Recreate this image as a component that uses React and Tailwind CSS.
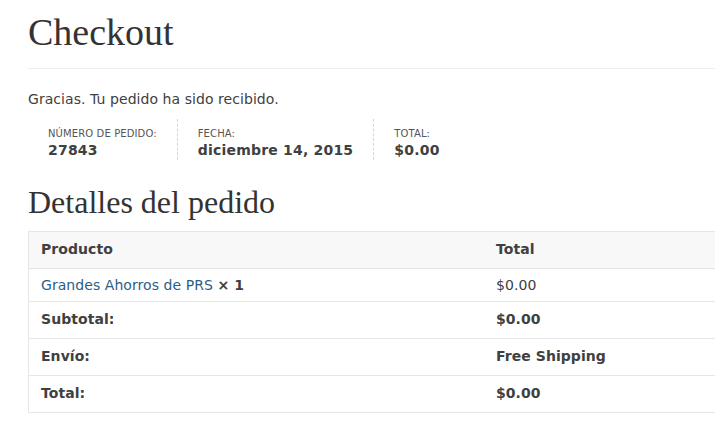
import React from "react";

const serif = { fontFamily: '"Liberation Serif", "Times New Roman", serif' };

function Row({ left, right, head, product, last }) {
  const pad = product ? "pt-[7px] pb-[7px]" : "pt-[8px] pb-[10px]";
  return (
    <div
      className={`flex ${head ? "bg-[#f8f8f8]" : ""} ${last ? "" : "border-b border-[#e6e6e6]"}`}
    >
      <div className={`w-[455px] shrink-0 px-3 leading-[18px] ${pad}`}>{left}</div>
      <div className={`flex-1 px-3 leading-[18px] ${pad}`}>{right}</div>
    </div>
  );
}

export default function App() {
  return (
    <div
      className="w-full overflow-hidden bg-white text-[#404040] text-[14px] pl-[28px] tracking-[0.06px]"
      style={{ fontFamily: '"DejaVu Sans", Verdana, sans-serif' }}
    >
      <div className="border-b border-[#eeeeee] pb-[17px]">
        <h1 className="mt-[13px] text-[38px] leading-none text-[#333333] font-normal tracking-normal" style={serif}>
          Checkout
        </h1>
      </div>

      <p className="mt-[20px] leading-[20px]">Gracias. Tu pedido ha sido recibido.</p>

      <ul className="mt-[10px] flex">
        <li className="px-5 pt-[8px] pb-[1px] border-r border-dashed border-[#d6d6d6]">
          <div className="text-[10px] leading-[14px] uppercase text-[#555555] tracking-[0.12px]">Número de pedido:</div>
          <div className="font-bold leading-[18px] text-[#404040] tracking-[0.2px]">27843</div>
        </li>
        <li className="px-5 pt-[8px] pb-[1px] border-r border-dashed border-[#d6d6d6]">
          <div className="text-[10px] leading-[14px] uppercase text-[#555555] tracking-[0.12px]">Fecha:</div>
          <div className="font-bold leading-[18px] text-[#404040] tracking-[0.2px]">diciembre 14, 2015</div>
        </li>
        <li className="px-5 pt-[8px] pb-[1px]">
          <div className="text-[10px] leading-[14px] uppercase text-[#555555] tracking-[0.12px]">Total:</div>
          <div className="font-bold leading-[18px] text-[#404040] tracking-[0.2px]">$0.00</div>
        </li>
      </ul>

      <h2 className="mt-[26px] mb-[13px] text-[32px] leading-none text-[#333333] font-normal tracking-normal" style={serif}>
        Detalles del pedido
      </h2>

      <div className="w-[800px] border border-[#e6e6e6] mb-[18px]">
        <Row head left={<span className="font-bold">Producto</span>} right={<span className="font-bold">Total</span>} />
        <Row
          product
          left={
            <span>
              <span className="text-[#2c5d87]">Grandes Ahorros de PRS</span>{" "}
              <span className="font-bold">× 1</span>
            </span>
          }
          right={<span>$0.00</span>}
        />
        <Row left={<span className="font-bold">Subtotal:</span>} right={<span className="font-bold">$0.00</span>} />
        <Row left={<span className="font-bold">Envío:</span>} right={<span className="font-bold">Free Shipping</span>} />
        <Row last left={<span className="font-bold">Total:</span>} right={<span className="font-bold">$0.00</span>} />
      </div>
    </div>
  );
}
